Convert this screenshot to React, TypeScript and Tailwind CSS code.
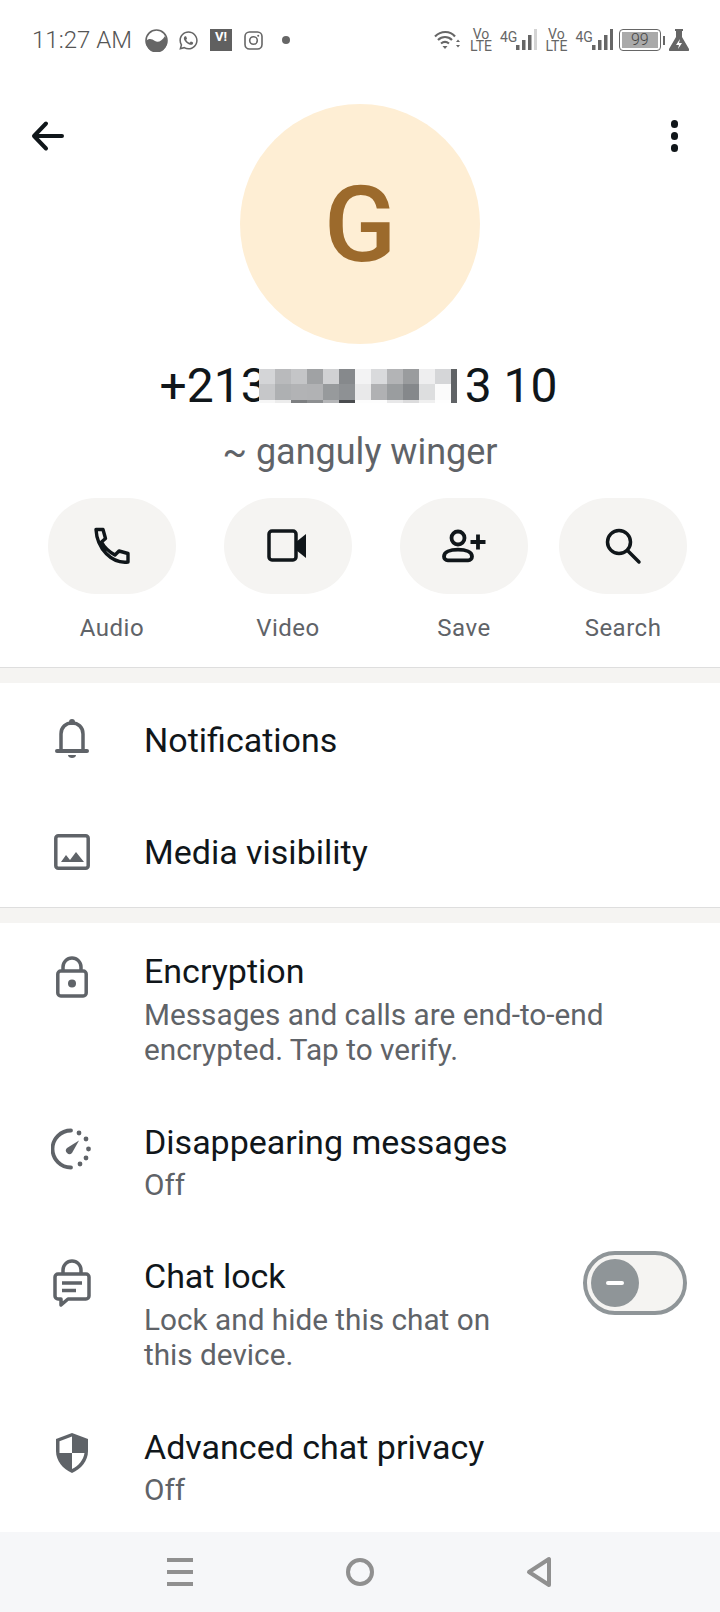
import { FaWhatsapp } from "react-icons/fa";

const FONT = { fontFamily: "Roboto, sans-serif" };

const BLUR_TOP = ["#d4d5d7", "#b9babc", "#c4c5c7", "#a0a2a4", "#d0d1d3", "#86898c", "#f3f3f4", "#d9dadc", "#b3b4b6", "#9a9c9e", "#eeeeef", "#d5d6d8"];
const BLUR_MID = ["#c6c7c9", "#aeb0b2", "#b2b3b5", "#b1b2b4", "#979a9c", "#8e9194", "#e9e9ea", "#b0b1b3", "#9a9d9f", "#85888b", "#dddedf", "#fbfbfb"];
const BLUR_LOW = ["#f6f6f6", "#ececec", "#7d7f81", "#8d8f91", "#b5b6b8", "#4a4c4f", "#fdfdfd", "#fdfdfd", "#e8e8e9", "#dcdcdd", "#f0f0f0", "#fefefe"];

function Bars({ dim }: { dim?: boolean }) {
  return (
    <svg width="21" height="22" viewBox="0 0 21 22" className="ml-[-1px]">
      <rect x="0" y="16" width="3.5" height="5" fill="#666" />
      <rect x="6" y="11" width="3.5" height="10" fill="#666" />
      <rect x="12" y="6" width="3.5" height="15" fill="#666" />
      <rect x="18" y="0" width="3" height="21" fill={dim ? "#d4d4d4" : "#666"} />
    </svg>
  );
}

function VoLte({ className }: { className: string }) {
  return (
    <div className={`flex flex-col items-center text-[14px] leading-[12px] text-[#666] ${className}`}>
      <span>Vo</span>
      <span>LTE</span>
    </div>
  );
}

function StatusBar() {
  return (
    <div className="flex h-[60px] shrink-0 items-center pt-[20px] text-[#666]">
      <span className="ml-[32px] w-[102px] text-[24px] font-light leading-none text-[#555]">11:27 AM</span>
      <svg width="23" height="23" viewBox="0 0 23 23" className="ml-[11px]">
        <circle cx="11.5" cy="11.5" r="10.5" fill="none" stroke="#666" strokeWidth="1.6" />
        <path d="M1 12c3-3 6-2 9 0s7 0 10-5c2 3 2 6 2 7a10.5 10.5 0 0 1-21-2z" fill="#666" />
      </svg>
      <FaWhatsapp size={21} className="ml-[10px]" color="#666" />
      <div className="ml-[11px] flex h-[22px] w-[22px] items-start justify-center bg-[#606060] text-[13px] font-bold leading-[15px] text-white">V!</div>
      <svg width="19" height="19" viewBox="0 0 19 19" className="ml-[12px]">
        <rect x="1" y="1" width="17" height="17" rx="4.5" fill="none" stroke="#666" strokeWidth="1.6" />
        <circle cx="9.5" cy="9.5" r="3.8" fill="none" stroke="#666" strokeWidth="1.6" />
        <circle cx="14.2" cy="4.8" r="1" fill="#666" />
      </svg>
      <div className="ml-[19px] h-[8px] w-[8px] rounded-full bg-[#666]" />

      <svg width="26" height="20" viewBox="0 0 26 20" className="ml-[144px]">
        <path d="M1 6.5c6-6 15-6 20 0M4 10c4-4 10-4 14 0M7 13.5c2.500-2 5.500-2 8 0" fill="none" stroke="#666" strokeWidth="2.200" />
        <path d="M8.500 16h5L11 19z" fill="#666" />
        <path d="M22 12l2-2.500 2 2.500zM22 15l2 2.500 2-2.500z" fill="#666" />
      </svg>
      <VoLte className="ml-[10px]" />
      <div className="ml-[8px] flex items-start">
        <span className="mt-[1px] text-[14px] leading-none">4G</span>
        <Bars dim />
      </div>
      <VoLte className="ml-[8px]" />
      <div className="ml-[8px] flex items-start">
        <span className="mt-[1px] text-[14px] leading-none">4G</span>
        <Bars />
      </div>
      <div className="ml-[6px] flex h-[22px] w-[42px] items-center justify-center rounded-[4px] border-[1.5px] border-[#666] p-[2px]">
        <div className="flex h-full w-full items-center justify-center bg-[#aaa] text-[16px] font-light leading-none text-[#444]">99</div>
      </div>
      <div className="ml-[2px] h-[9px] w-[2px] bg-[#666]" />
      <svg width="20" height="22" viewBox="0 0 20 22" className="ml-[4px]">
        <path d="M6 0h8v2h-1v6l7 12a1.500 1.500 0 0 1-1.300 2H1.300A1.500 1.500 0 0 1 0 20l7-12V2H6z" fill="#666" />
        <path d="M11 10l-4 6h3l-1 4 4-6h-3z" fill="#fff" />
      </svg>
    </div>
  );
}

function ProfileHead() {
  return (
    <div className="grid grid-cols-[1fr_240px_1fr] pt-[44px]">
      <svg width="36" height="36" viewBox="0 0 36 36" className="ml-[30px] mt-[14px]">
        <path d="M32 18H5M16 5.500L4 18l12 12.500" fill="none" stroke="#10161a" strokeWidth="4" strokeLinecap="round" strokeLinejoin="round" />
      </svg>
      <div className="flex h-[240px] w-[240px] items-center justify-center rounded-full bg-[#feeed4] pt-[2px] text-[106px] font-medium leading-none text-[#9c6a2c]">G</div>
      <div className="mr-[42px] mt-[16px] flex flex-col items-end gap-[4.500px]">
        <div className="h-[7.500px] w-[7.500px] rounded-full bg-[#10161a]" />
        <div className="h-[7.500px] w-[7.500px] rounded-full bg-[#10161a]" />
        <div className="h-[7.500px] w-[7.500px] rounded-full bg-[#10161a]" />
      </div>
    </div>
  );
}

function PhoneLine() {
  return (
    <div className="mt-[18px] flex h-[48px] items-center justify-center pr-[3px] text-[48px] leading-none text-[#10161a]">
      <span>+213</span>
      <div className="ml-[-9px] flex h-[34px] flex-col">
        <div className="flex h-[15px]">
          {BLUR_TOP.map((c, i) => (
            <div key={i} className="h-full w-[16px]" style={{ backgroundColor: c }} />
          ))}
        </div>
        <div className="flex h-[16px]">
          {BLUR_MID.map((c, i) => (
            <div key={i} className="h-full w-[16px]" style={{ backgroundColor: c }} />
          ))}
        </div>
        <div className="flex h-[3px]">
          {BLUR_LOW.map((c, i) => (
            <div key={i} className="h-full w-[16px]" style={{ backgroundColor: c }} />
          ))}
        </div>
      </div>
      <div className="h-[34px] w-[6px] bg-[#606366]" />
      <span className="ml-[8px]">3 10</span>
    </div>
  );
}

const ICON_STROKE = "#10161a";

const ACTIONS = [
  {
    label: "Audio",
    wrap: "ml-[48px]",
    icon: (
      <svg width="40" height="40" viewBox="0 0 40 40" fill="none" stroke={ICON_STROKE} strokeWidth="3.400" strokeLinejoin="round">
        <path d="M4 3.500h7l2.500 9-4 3.500c3 6 8 10 13.500 13l4-4 9 2.500v8.500C20 38 5 23 4 3.500z" />
      </svg>
    ),
  },
  {
    label: "Video",
    wrap: "ml-[48px]",
    icon: (
      <svg width="42" height="36" viewBox="0 0 42 36" fill="none">
        <rect x="2" y="3" width="27" height="29" rx="3" stroke={ICON_STROKE} strokeWidth="3.500" />
        <path d="M29 14l10-8v24l-10-8z" fill={ICON_STROKE} />
      </svg>
    ),
  },
  {
    label: "Save",
    wrap: "ml-[48px]",
    icon: (
      <svg width="46" height="38" viewBox="0 0 46 38" fill="none" stroke={ICON_STROKE} strokeWidth="3.800">
        <circle cx="17" cy="11" r="6.500" />
        <path d="M3 29.500C3 25 9 22.700 17 22.700S31 25 31 29.500a3.800 3.800 0 0 1-3.800 3.800H6.800A3.800 3.800 0 0 1 3 29.500z" />
        <path d="M29.500 15h15M37 7.500v15" />
      </svg>
    ),
  },
  {
    label: "Search",
    wrap: "ml-[31px]",
    icon: (
      <svg width="38" height="38" viewBox="0 0 38 38" fill="none" stroke={ICON_STROKE} strokeWidth="3.500" strokeLinecap="round">
        <circle cx="15" cy="15" r="11.500" />
        <path d="M23.500 23.500L35 35" />
      </svg>
    ),
  },
];

function ActionButtons() {
  return (
    <div className="mt-[25px] flex h-[170px] shrink-0 border-b border-[#dedede]">
      {ACTIONS.map((a) => (
        <div key={a.label} className={`flex w-[128px] flex-col items-center ${a.wrap}`}>
          <div className="flex h-[96px] w-[128px] items-center justify-center rounded-[48px] bg-[#f5f4f2]">{a.icon}</div>
          <span className="mt-[21px] text-[24px] leading-[27px] tracking-[0.5px] text-[#5f6368]">{a.label}</span>
        </div>
      ))}
    </div>
  );
}

function SectionGap() {
  return <div className="h-[15px] shrink-0 bg-[#f5f4f2]" />;
}

const GRAY = "#5f6368";

function BellIcon() {
  return (
    <svg width="34" height="42" viewBox="0 0 34 42" fill="none">
      <path d="M6 31V16c0-7 5-11 11-11s11 4 11 11v15" stroke={GRAY} strokeWidth="3.500" />
      <path d="M2 33h30" stroke={GRAY} strokeWidth="4" strokeLinecap="round" />
      <circle cx="17" cy="4" r="3" fill={GRAY} />
      <path d="M13 37h8c0 2-2 3-4 3s-4-1-4-3z" fill={GRAY} />
    </svg>
  );
}

function ImageIcon() {
  return (
    <svg width="36" height="36" viewBox="0 0 36 36" fill="none">
      <rect x="1.800" y="1.800" width="32.400" height="32.400" rx="2.500" stroke={GRAY} strokeWidth="3.500" />
      <path d="M7 28l5-7 4 5 6-8 8 10z" fill={GRAY} />
    </svg>
  );
}

function LockIcon() {
  return (
    <svg width="32" height="42" viewBox="0 0 32 42" fill="none">
      <path d="M7 15V11a9 9 0 0 1 18 0v4" stroke={GRAY} strokeWidth="3.500" />
      <rect x="1.800" y="15" width="28.400" height="25" rx="3" stroke={GRAY} strokeWidth="3.500" />
      <circle cx="16" cy="27.500" r="4" fill={GRAY} />
    </svg>
  );
}

function TimerIcon() {
  return (
    <svg width="42" height="42" viewBox="0 0 42 42" fill="none">
      <path d="M20 2.500A18.500 18.500 0 1 0 20 39.500" stroke={GRAY} strokeWidth="3.800" strokeLinecap="round" />
      <path d="M16 20L28 12.500L21 25a3.500 3.500 0 0 1-5-5z" fill={GRAY} />
      <circle cx="28" cy="5" r="2.400" fill={GRAY} />
      <circle cx="35" cy="11" r="2.400" fill={GRAY} />
      <circle cx="37.500" cy="21" r="2.400" fill={GRAY} />
      <circle cx="35" cy="30" r="2.400" fill={GRAY} />
      <circle cx="29" cy="36" r="2.400" fill={GRAY} />
    </svg>
  );
}

function ChatLockIcon() {
  return (
    <svg width="38" height="48" viewBox="0 0 38 48" fill="none">
      <path d="M10 15v-4a9 9 0 0 1 18 0v4" stroke={GRAY} strokeWidth="3.500" />
      <path d="M5 15h28a3 3 0 0 1 3 3v19a3 3 0 0 1-3 3H15l-7 6v-6H5a3 3 0 0 1-3-3V18a3 3 0 0 1 3-3z" stroke={GRAY} strokeWidth="3.500" strokeLinejoin="round" />
      <path d="M9 24h20M9 31.500h14" stroke={GRAY} strokeWidth="3.500" />
    </svg>
  );
}

function ShieldIcon() {
  return (
    <svg width="32" height="40" viewBox="0 0 32 40" fill="none">
      <path d="M16 0L32 6v12c0 10-7 18-16 22C7 36 0 28 0 18V6z" fill={GRAY} />
      <path d="M16 3.500L3.500 8.200V20H16zM16 20h12.500c-1 7-6 13-12.500 16z" fill="#fff" />
    </svg>
  );
}

function Row({
  icon,
  iconClass,
  title,
  sub,
  right,
  className,
}: {
  icon: React.ReactNode;
  iconClass?: string;
  title: string;
  sub?: string[];
  right?: React.ReactNode;
  className: string;
}) {
  return (
    <div className={`flex shrink-0 ${className}`}>
      <div className={`flex h-[48px] w-[144px] items-center justify-center ${iconClass ?? ""}`}>{icon}</div>
      <div className="flex-1">
        <div className="text-[34px] leading-[48px] text-[#10161a]">{title}</div>
        {sub && (
          <div className={`text-[29.750px] leading-[35px] text-[#5f6368] ${sub.length > 1 ? "mt-[2px]" : "mt-[1px]"}`}>
            {sub.map((s) => (
              <div key={s}>{s}</div>
            ))}
          </div>
        )}
      </div>
      {right}
    </div>
  );
}

function ChatLockToggle() {
  return (
    <div className="mr-[33px] mt-[-1px] flex h-[64px] w-[104px] items-center rounded-full border-[4px] border-[#8f9598] bg-[#f5f4f2] pl-[4px]">
      <div className="flex h-[48px] w-[48px] items-center justify-center rounded-full bg-[#8f9598]">
        <div className="h-[4px] w-[18px] rounded-full bg-white" />
      </div>
    </div>
  );
}

function NavBar() {
  return (
    <div className="mt-auto flex h-[80px] shrink-0 items-center bg-[#f6f7f9]">
      <div className="ml-[167px] flex h-[28px] w-[26px] flex-col justify-between">
        <div className="h-[4px] bg-[#909090]" />
        <div className="h-[4px] bg-[#909090]" />
        <div className="h-[4px] bg-[#909090]" />
      </div>
      <div className="ml-[153px] h-[28px] w-[28px] rounded-full border-[4px] border-[#909090]" />
      <svg width="26" height="32" viewBox="0 0 26 32" className="ml-[152px]">
        <path d="M23 3v26L3 16z" fill="none" stroke="#909090" strokeWidth="4" strokeLinejoin="round" />
      </svg>
    </div>
  );
}

export default function App() {
  return (
    <div className="flex h-[1612px] w-[720px] flex-col overflow-hidden bg-white" style={FONT}>
      <StatusBar />
      <ProfileHead />
      <PhoneLine />
      <div className="mt-[21px] text-center text-[36px] leading-[42px] text-[#5f6368]">~ ganguly winger</div>
      <ActionButtons />
      <SectionGap />
      <Row className="mt-[33px]" iconClass="pb-[2px]" icon={<BellIcon />} title="Notifications" />
      <Row className="mt-[64px]" icon={<ImageIcon />} title="Media visibility" />
      <div className="mt-[31px] h-[1px] shrink-0 bg-[#dedede]" />
      <SectionGap />
      <Row className="mt-[24px]" iconClass="pt-[12px]" icon={<LockIcon />} title="Encryption" sub={["Messages and calls are end-to-end", "encrypted. Tap to verify."]} />
      <Row className="mt-[51px]" iconClass="pt-[14px]" icon={<TimerIcon />} title="Disappearing messages" sub={["Off"]} />
      <Row className="mt-[50px]" iconClass="pt-[14px]" icon={<ChatLockIcon />} title="Chat lock" sub={["Lock and hide this chat on", "this device."]} right={<ChatLockToggle />} />
      <Row className="mt-[51px]" iconClass="pt-[12px]" icon={<ShieldIcon />} title="Advanced chat privacy" sub={["Off"]} />
      <NavBar />
    </div>
  );
}
